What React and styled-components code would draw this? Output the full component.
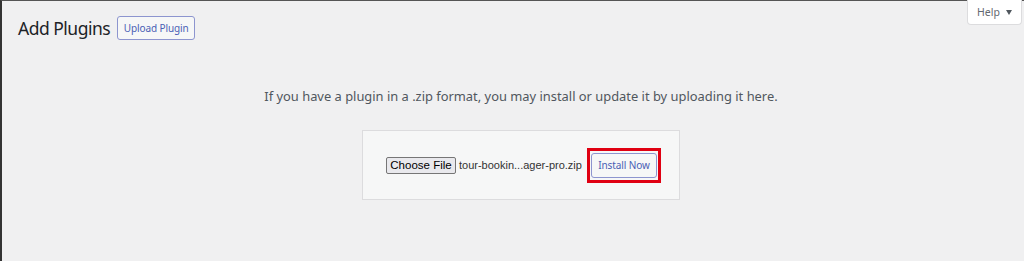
import React from "react";
import styled, { createGlobalStyle } from "styled-components";

const Global = createGlobalStyle`
  html, body { margin: 0; padding: 0; background: #f0f0f1; }
  body { font-family: "Noto Sans", "Open Sans", sans-serif; }
`;

const Page = styled.div`
  box-sizing: border-box;
  width: 1024px;
  height: 261px;
  background: #f0f0f1;
  border-left: 2px solid #333;
  border-top: 1px solid #555;
  position: relative;
  padding: 0 0 0 16px;
`;

const Header = styled.div`
  display: flex;
  align-items: center;
  gap: 7px;
  padding-top: 14px;
`;

const Title = styled.h1`
  margin: 0;
  font-size: 17.5px;
  letter-spacing: -0.5px;
  font-weight: 400;
  color: #1d2327;
  line-height: 26px;
  white-space: nowrap;
`;

const OutlineButton = styled.button`
  box-sizing: border-box;
  flex-shrink: 0;
  width: ${(p) => p.$w}px;
  height: ${(p) => p.$h}px;
  padding: 0;
  border: 1px solid #8d95cf;
  border-radius: 3px;
  background: #f6f7f7;
  color: #4a5fb5;
  font-family: "Noto Sans", "Open Sans", sans-serif;
  font-size: 10px;
  letter-spacing: -0.1px;
  line-height: 1;
  white-space: nowrap;
  cursor: pointer;
`;

const HelpTab = styled.div`
  position: absolute;
  top: -1px;
  right: 2px;
  box-sizing: border-box;
  width: 55px;
  height: 25px;
  background: #fff;
  border: 1px solid #dcdcde;
  border-top: none;
  border-radius: 0 0 4px 4px;
  display: flex;
  align-items: center;
  justify-content: center;
  gap: 6px;
  color: #646970;
  font-size: 10.5px;
`;

const Arrow = styled.span`
  width: 0;
  height: 0;
  border-left: 3.5px solid transparent;
  border-right: 3.5px solid transparent;
  border-top: 5px solid #50575e;
  margin-top: 1px;
`;

const Upload = styled.div`
  display: flex;
  flex-direction: column;
  align-items: center;
`;

const Help = styled.p`
  margin: 0;
  padding-top: 46px;
  color: #50575e;
  font-size: 12.9px;
  line-height: 18px;
  text-align: center;
  white-space: nowrap;
`;

const Form = styled.div`
  box-sizing: border-box;
  margin-top: 25px;
  width: 318px;
  height: 70px;
  background: #f6f7f7;
  border: 1px solid #dcdcde;
  display: flex;
  align-items: center;
  justify-content: space-between;
  padding: 0 18px 0 23px;
`;

const FileInput = styled.div`
  display: flex;
  align-items: center;
  gap: 3px;
  font-family: "Liberation Sans", Arial, sans-serif;
  font-size: 11px;
  color: #333;
  white-space: nowrap;
`;

const ChooseButton = styled.button`
  box-sizing: border-box;
  flex-shrink: 0;
  height: 17px;
  width: 70px;
  padding: 0;
  background: #e9e9ed;
  border: 1px solid #767676;
  border-radius: 2px;
  font-family: "Liberation Sans", Arial, sans-serif;
  font-size: 11.5px;
  color: #000;
  line-height: 15px;
  white-space: nowrap;
`;

const Highlight = styled.div`
  box-sizing: border-box;
  flex-shrink: 0;
  width: 74px;
  height: 35px;
  border: 3px solid #e00012;
  display: flex;
  align-items: center;
  justify-content: center;
`;

export default function App() {
  return (
    <>
      <Global />
      <Page>
        <Header>
          <Title>Add Plugins</Title>
          <OutlineButton $w={78} $h={24}>Upload Plugin</OutlineButton>
        </Header>
        <HelpTab>
          Help <Arrow />
        </HelpTab>
        <Upload>
          <Help>
            If you have a plugin in a .zip format, you may install or update it by uploading it here.
          </Help>
          <Form>
            <FileInput>
              <ChooseButton>Choose File</ChooseButton>
              <span>tour-bookin...ager-pro.zip</span>
            </FileInput>
            <Highlight>
              <OutlineButton $w={66} $h={25}>Install Now</OutlineButton>
            </Highlight>
          </Form>
        </Upload>
      </Page>
    </>
  );
}
